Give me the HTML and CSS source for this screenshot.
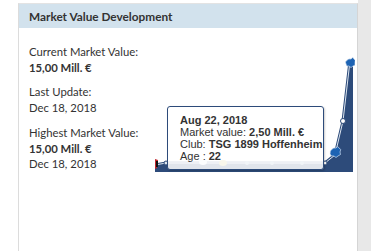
FILE: index.html
```html
<!DOCTYPE html>
<html>
<head>
<meta charset="utf-8">
<link rel="stylesheet" href="styles.css">
</head>
<body>
<div class="page">
  <div class="gutter"></div>
  <div class="panel">
    <div class="head">Market Value Development</div>
    <div class="body">
      <div class="info">
        <div class="group">
          <div>Current Market Value:</div>
          <div class="b">15,00 Mill. €</div>
        </div>
        <div class="group">
          <div>Last Update:</div>
          <div>Dec 18, 2018</div>
        </div>
        <div class="group">
          <div>Highest Market Value:</div>
          <div class="b">15,00 Mill. €</div>
          <div>Dec 18, 2018</div>
        </div>
      </div>
      <div class="chart">
        <svg class="plot" width="200" height="120" viewBox="0 0 200 120">
          <polygon points="0,110 11,108 170,108 180,100 188,66 195,6 198,6 198,117 0,117" fill="#2d4b7a"/>
          <polyline points="0,110 11,108 170,108 180,100 188,66 195,6" fill="none" stroke="#2d4b7a" stroke-width="3"/>
          <polyline points="0,110 11,108 170,108 180,100 188,66 195,6" fill="none" stroke="#dde6f0" stroke-width="1"/>
          <path d="M0,104 l3,1 l-1,8 l-2,1z" fill="#c0262d"/>
          <path d="M1,106 l2,0 l0,6 l-2,0z" fill="#111"/>
          <circle cx="11" cy="108" r="2" fill="#dde6f0" stroke="#2d4b7a" stroke-width="1"/>
          <circle cx="92" cy="108" r="2" fill="#9fb4cc"/>
          <circle cx="117" cy="108" r="2" fill="#9fb4cc"/>
          <circle cx="147" cy="108" r="2" fill="#9fb4cc"/>
          <circle cx="170" cy="108" r="2" fill="#fff" stroke="#2d4b7a" stroke-width="1"/>
          <circle cx="188" cy="66" r="2.5" fill="#fff" stroke="#2d4b7a" stroke-width="1"/>
          <path d="M176,95 q3,-3 5,-2 q2,-3 3,0 q3,1 1,4 q2,3 -2,4 q-2,3 -4,0 q-3,1 -4,-2 q0,-3 1,-4z" fill="#1d63b3" stroke="#e8eef6" stroke-width="0.6"/>
          <path d="M191,6 q3,-3 5,-2 q2,-3 3,0 q2,1 1,4 q1,3 -2,3 q-2,3 -4,0 q-3,1 -3,-2 q-1,-2 0,-3z" fill="#1d63b3" stroke="#e8eef6" stroke-width="0.6"/>
          <ellipse cx="48" cy="107" rx="4" ry="3" fill="#e6edf5"/>
          <ellipse cx="68" cy="108" rx="4" ry="3" fill="#c9c070"/>
        </svg>
        <div class="tip">
          <div class="b">Aug 22, 2018</div>
          <div>Market value: <span class="b">2,50 Mill. €</span></div>
          <div>Club: <span class="b">TSG 1899 Hoffenheim</span></div>
          <div>Age : <span class="b">22</span></div>
        </div>
      </div>
    </div>
  </div>
  <div class="side"></div>
</div>
</body>
</html>
```
FILE: styles.css
```css
html, body {
  margin: 0;
  padding: 0;
  background: #fff;
}
.page {
  display: flex;
  width: 371px;
  height: 251px;
  overflow: hidden;
  font-family: "Lato", "Open Sans", sans-serif;
  color: #333;
}
.gutter {
  width: 18px;
  flex: none;
}
.panel {
  width: 338px;
  flex: none;
  border-left: 1px solid #dcdcdc;
  border-right: 1px solid #d5d5d5;
  border-top: 1px solid #e3e3e3;
  margin-top: 3px;
  background: #fff;
}
.side {
  flex: 1;
  background: #e8e8e8;
}
.head {
  background: #d2e2ed;
  height: 24px;
  line-height: 25px;
  padding-left: 10px;
  font-size: 11.8px;
  font-weight: 700;
  color: #333;
}
.body {
  display: flex;
  padding-left: 10px;
  padding-top: 16px;
}
.info {
  width: 126px;
  flex: none;
  font-size: 11.3px;
  line-height: 15.7px;
}
.group {
  margin-bottom: 9px;
}
.b {
  font-weight: 700;
}
.chart {
  position: relative;
  width: 200px;
  height: 120px;
  margin-top: 11px;
}
.plot {
  display: block;
}
.tip {
  position: absolute;
  left: 12px;
  top: 51px;
  width: 143px;
  height: 51px;
  padding: 7px 0 4px 12px;
  border: 1px solid #2d4b7a;
  border-radius: 3px;
  background: rgba(255, 255, 255, 0.86);
  box-shadow: 1px 1px 2px rgba(0, 0, 0, 0.2);
  font-family: "Liberation Sans", Arial, sans-serif;
  font-size: 11px;
  line-height: 12px;
  color: #333;
  white-space: nowrap;
}
```
